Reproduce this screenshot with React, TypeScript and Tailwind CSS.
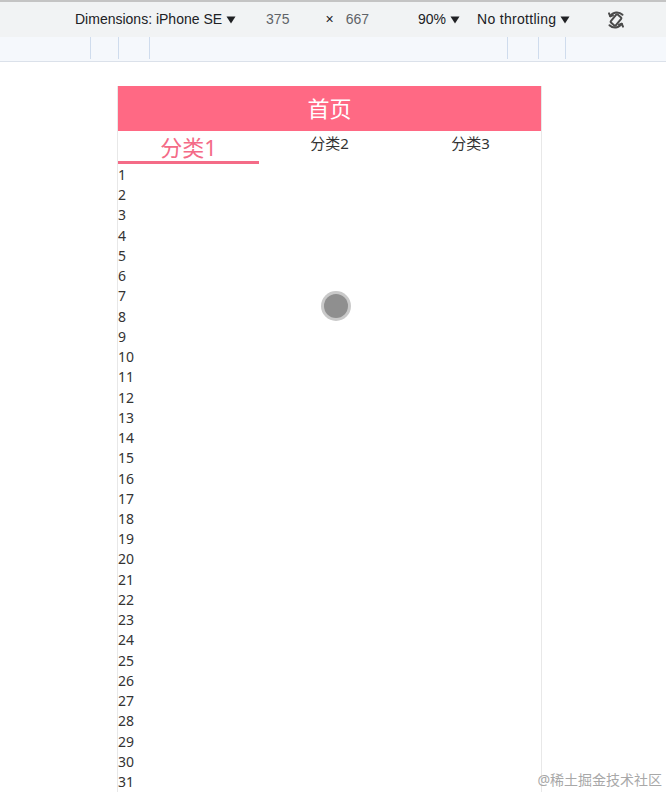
import React from 'react';

const Caret = () => (
  <svg width="10" height="8" viewBox="0 0 10 8" className="ml-[4px]">
    <path d="M0.5 0.5h9L5 7.5z" fill="#202124" />
  </svg>
);

const RotateIcon = () => (
  <svg width="24" height="24" viewBox="0 0 24 24" fill="none" stroke="#4a4a4a" strokeWidth="2" strokeLinecap="round" strokeLinejoin="round">
    <g transform="rotate(40 12 12)">
      <rect x="8.8" y="6.8" width="6.4" height="10.4" rx="1" />
    </g>
    <path d="M6.2 8.2A8 8 0 0 1 18.5 6.8" />
    <path d="M5 5.4l1.2 2.8 2.8-1" />
    <path d="M17.8 15.8A8 8 0 0 1 5.5 17.2" />
    <path d="M19 18.6l-1.2-2.8-2.8 1" />
  </svg>
);

const App: React.FC = () => {
  const tabs = ['分类1', '分类2', '分类3'];
  const items = Array.from({ length: 31 }, (_, i) => i + 1);

  return (
    <div className="w-[666px] h-[792px] overflow-hidden bg-white relative" style={{ fontFamily: '"Noto Sans", "Noto Sans CJK SC", sans-serif' }}>
      {/* devtools toolbar */}
      <div className="h-[37px] bg-[#f1f3f4] border-t-2 border-[#c4c4c4] flex items-center text-[14px] text-[#202124]" style={{ fontFamily: '"Liberation Sans", sans-serif' }}>
        <div className="ml-[75px] flex items-center">Dimensions: iPhone SE<Caret /></div>
        <div className="ml-[30px] text-[#5f6368]">375</div>
        <div className="ml-[36px] text-[#202124]">×</div>
        <div className="ml-[12px] text-[#5f6368]">667</div>
        <div className="ml-[49px] flex items-center">90%<Caret /></div>
        <div className="ml-[17px] flex items-center tracking-[0.3px]">No throttling<Caret /></div>
        <div className="ml-[34px] flex items-center"><RotateIcon /></div>
      </div>
      {/* ruler */}
      <div className="h-[25px] bg-[#f5f8fc] border-b border-[#dbe1ea] flex items-start">
        <div className="ml-[90px] w-px h-[22px] bg-[#cfdced]" />
        <div className="ml-[27px] w-px h-[22px] bg-[#cfdced]" />
        <div className="ml-[30px] w-px h-[22px] bg-[#cfdced]" />
        <div className="ml-[357px] w-px h-[22px] bg-[#cfdced]" />
        <div className="ml-[30px] w-px h-[22px] bg-[#cfdced]" />
        <div className="ml-[26px] w-px h-[22px] bg-[#cfdced]" />
      </div>

      {/* device viewport */}
      <div className="ml-[117px] mt-[24px] w-[425px] border-x border-[#e8e8e8]">
        <div className="h-[45px] bg-[#ff6984] flex items-center justify-center text-white text-[22px]">首页</div>
        <div className="flex h-[33px]">
          {tabs.map((t, i) => (
            <div key={t} className="flex-1 flex flex-col items-center">
              {i === 0 ? (
                <>
                  <div className="text-[22px] leading-[28px] text-[#f46b87] mt-[2px]">{t}</div>
                  <div className="mt-auto shrink-0 h-[3px] w-full bg-[#f46b87]" />
                </>
              ) : (
                <div className="text-[15px] leading-[22px] text-[#333] mt-[1px]">{t}</div>
              )}
            </div>
          ))}
        </div>
        <div className="text-[14px] leading-[20.23px] text-[#333] pt-[1px]">
          {items.map(n => (
            <div key={n}>{n}</div>
          ))}
        </div>
      </div>

      {/* touch cursor */}
      <div className="absolute left-[321px] top-[291px] w-[30px] h-[30px] rounded-full bg-[#c9c9c9] flex items-center justify-center">
        <div className="w-[24px] h-[24px] rounded-full bg-[#8f8f8f]" />
      </div>

      {/* watermark */}
      <div className="absolute right-[4px] top-[769px] text-[14px] text-[#a8a8a8]">@稀土掘金技术社区</div>
    </div>
  );
};

export default App;
